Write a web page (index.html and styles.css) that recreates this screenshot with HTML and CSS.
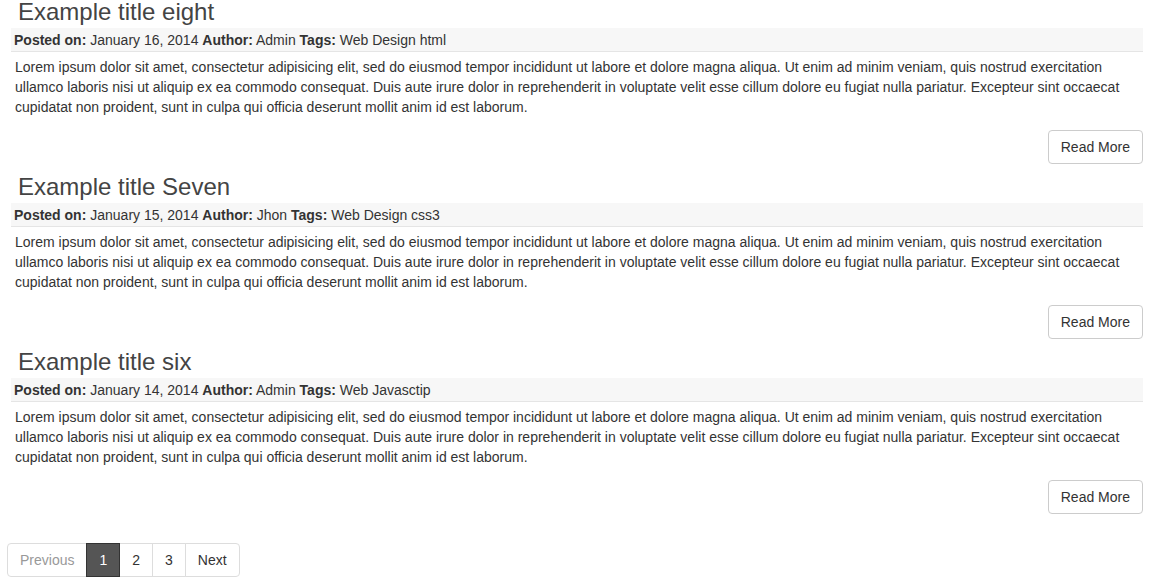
FILE: index.html
```html
<!DOCTYPE html>
<html lang="en">
<head>
    <meta charset="UTF-8">
    <meta name="viewport" content="width=device-width, initial-scale=1.0">
    <title>Blog</title>
    <link rel="stylesheet" href="styles.css">
</head>
<body>
    <div class="posts">
        <div class="post">
            <h2 class="post-title">Example title eight</h2>
            <div class="post-meta"><b>Posted on:</b> January 16, 2014 <b>Author:</b> Admin <b>Tags:</b> Web Design html</div>
            <p>Lorem ipsum dolor sit amet, consectetur adipisicing elit, sed do eiusmod tempor incididunt ut labore et dolore magna aliqua. Ut enim ad minim veniam, quis nostrud exercitation ullamco laboris nisi ut aliquip ex ea commodo consequat. Duis aute irure dolor in reprehenderit in voluptate velit esse cillum dolore eu fugiat nulla pariatur. Excepteur sint occaecat cupidatat non proident, sunt in culpa qui officia deserunt mollit anim id est laborum.</p>
            <div class="post-footer"><button class="btn">Read More</button></div>
        </div>
        <div class="post">
            <h2 class="post-title">Example title Seven</h2>
            <div class="post-meta"><b>Posted on:</b> January 15, 2014 <b>Author:</b> Jhon <b>Tags:</b> Web Design css3</div>
            <p>Lorem ipsum dolor sit amet, consectetur adipisicing elit, sed do eiusmod tempor incididunt ut labore et dolore magna aliqua. Ut enim ad minim veniam, quis nostrud exercitation ullamco laboris nisi ut aliquip ex ea commodo consequat. Duis aute irure dolor in reprehenderit in voluptate velit esse cillum dolore eu fugiat nulla pariatur. Excepteur sint occaecat cupidatat non proident, sunt in culpa qui officia deserunt mollit anim id est laborum.</p>
            <div class="post-footer"><button class="btn">Read More</button></div>
        </div>
        <div class="post">
            <h2 class="post-title">Example title six</h2>
            <div class="post-meta"><b>Posted on:</b> January 14, 2014 <b>Author:</b> Admin <b>Tags:</b> Web Javasctip</div>
            <p>Lorem ipsum dolor sit amet, consectetur adipisicing elit, sed do eiusmod tempor incididunt ut labore et dolore magna aliqua. Ut enim ad minim veniam, quis nostrud exercitation ullamco laboris nisi ut aliquip ex ea commodo consequat. Duis aute irure dolor in reprehenderit in voluptate velit esse cillum dolore eu fugiat nulla pariatur. Excepteur sint occaecat cupidatat non proident, sunt in culpa qui officia deserunt mollit anim id est laborum.</p>
            <div class="post-footer"><button class="btn">Read More</button></div>
        </div>
    </div>

    <ul class="pagination">
        <li class="disabled"><a href="#">Previous</a></li>
        <li class="active"><a href="#">1</a></li>
        <li><a href="#">2</a></li>
        <li><a href="#">3</a></li>
        <li><a href="#">Next</a></li>
    </ul>
</body>
</html>
```

FILE: styles.css
```css
body {
    margin: 0;
    padding: 0 14px 0 11px;
    font-family: "Liberation Sans", Arial, sans-serif;
    font-size: 14px;
    line-height: 20px;
    color: #333;
    background: #fff;
}

.post {
    height: 175px;
}

.post-title {
    margin: 0;
    padding: 0 0 3px 7px;
    font-size: 24px;
    font-weight: normal;
    line-height: 24px;
    color: #444;
}

.post-meta {
    margin-top: 1px;
    padding: 2px 3px 1px;
    background-color: #f7f7f7;
    border-bottom: 1px solid #e5e5e5;
}

.post p {
    margin: 5px 0 0;
    padding: 0 4px;
}

.post-footer {
    display: flex;
    justify-content: flex-end;
    margin-top: 13px;
}

.btn {
    padding: 6px 12px;
    font-family: inherit;
    font-size: 14px;
    line-height: 20px;
    color: #333;
    background-color: #fff;
    border: 1px solid #ccc;
    border-radius: 4px;
    cursor: pointer;
}

.pagination {
    display: flex;
    margin: 18px 0 0 -4px;
    padding: 0;
    list-style: none;
}

.pagination a {
    display: block;
    padding: 6px 12px;
    margin-left: -1px;
    color: #333;
    text-decoration: none;
    background-color: #fff;
    border: 1px solid #ddd;
}

.pagination li:first-child a {
    margin-left: 0;
    border-radius: 4px 0 0 4px;
}

.pagination li:last-child a {
    border-radius: 0 4px 4px 0;
}

.pagination .disabled a {
    color: #999;
}

.pagination .active a {
    position: relative;
    color: #fff;
    background-color: #555;
    border-color: #333;
}
```
